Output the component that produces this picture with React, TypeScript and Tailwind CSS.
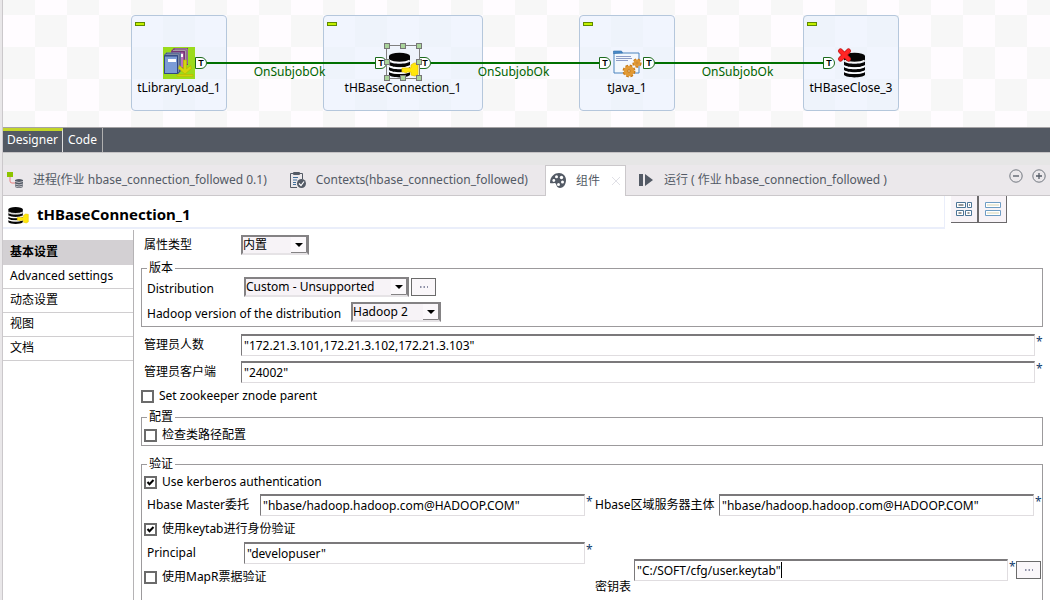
import React from "react";

const INK = "#535a65";

function DatabaseIcon({ overlay, className }: { overlay?: "key"; className?: string }) {
  return (
    <svg viewBox="0 0 32 32" className={className} aria-hidden="true">
      <path d="M2 9v4c0 3 21 3 21 0V9z" fill="#050505" />
      <ellipse cx="12.500" cy="9" rx="10.500" ry="3.200" fill="#050505" />
      <path d="M2 14.500c3 3 18 3 21 0V18c-3 3-18 3-21 0z" fill="#050505" />
      <path d="M2 20c3 3 18 3 21 0v3c-3 3-18 3-21 0z" fill="#050505" />
      <path d="M2 25c3 2.600 18 2.600 21 0v3c-3 3.200-18 3.200-21 0z" fill="#050505" />
      <path d="M2.500 13.200c4 2.800 16 2.800 20 0M2.500 18.900c4 2.800 16 2.800 20 0M2.500 24.200c4 2.700 16 2.700 20 0" fill="none" stroke="#fff" strokeWidth="1.200" />
      {overlay === "key" && (
        <g fill="#ffe70a" stroke="#e8c800" strokeWidth=".8">
          <path d="M15 21h9v-3l3-2 4 .5v11l-3 1.500-4-1v-3h-4l-1 1-2-1h-2z" />
        </g>
      )}
    </svg>
  );
}

function LibraryIcon() {
  return (
    <svg viewBox="0 0 32 32" className="size-8" aria-hidden="true">
      <path fill="#9bdb1c" d="M0 0h32v32H0z" />
      <path d="M8 4l3-3h14v17h-3v4H8z" fill="#7d3b7c" />
      <path d="M10 3.500h12.500V20M11.500 2h12.500v15" fill="none" stroke="#a79aa9" />
      <path d="M9.500 5h11.500v16H9.500z" fill="#bc72bd" stroke="#71316f" />
      <path d="M17 7h3v3h-3z" fill="#fff" />
      <path d="M1 8l2.500-2.500H18V24l-3 3H1z" fill="#3f558d" />
      <path d="M2.500 7.500h13V25M4 6h13v17" fill="none" stroke="#8d97aa" strokeWidth=".8" />
      <path d="M1.500 9h13v17.500h-13z" fill="#7b9bd6" stroke="#33477f" />
      <path d="M5 12h8v3H5z" fill="#fff" />
      <path d="M20.500 13h3v9l4-3.500 1 3-6.500 5.500-6.500-5.500 1-3 4 3.500zM14 27.500h16v1.800H14z" fill="#d3d60c" stroke="#b9b900" strokeWidth=".7" />
    </svg>
  );
}

function JavaIcon() {
  const gear = (cx: number, cy: number, r: number) => (
    <g>
      <circle cx={cx} cy={cy} r={r} fill="none" stroke="#c77916" strokeWidth="2.500" strokeDasharray="2.500 1.600" />
      <circle cx={cx} cy={cy} r={r} fill="#e29a35" />
      <circle cx={cx} cy={cy} r={r / 3.5} fill="#d9b27a" stroke="#c77916" strokeWidth=".7" />
    </g>
  );
  return (
    <svg viewBox="0 0 32 32" className="size-8" aria-hidden="true">
      <path d="M3 26V6h25v20z" fill="#f3f8fd" stroke="#4b83be" />
      <path d="M2.500 6.500V4h8l1 2h-2z" fill="#4d8dcb" stroke="#2f6ba8" strokeWidth=".6" />
      <path d="M5 9.500h15M5 11.500h16M5 13.500h12" stroke="#8091c0" strokeWidth=".9" />
      {gear(26, 16, 3.4)}
      {gear(18, 24, 5.2)}
    </svg>
  );
}

function Trigger({ className }: { className: string }) {
  return (
    <span
      className={`absolute top-[42px] flex h-3 w-3 items-center justify-center rounded-r-md border border-[#1c6b1c] bg-white font-['Liberation_Sans',sans-serif] text-[9px] leading-none font-bold text-black ${className}`}
    >
      T
    </span>
  );
}

function Node({ name, className, children }: { name: string; className: string; children: React.ReactNode }) {
  return (
    <div className={`absolute top-[15px] h-24 rounded-[4px] border border-[#b5c7dc] bg-[#e9f1fd]/65 ${className}`}>
      <span className="absolute top-[6px] left-[3px] h-1 w-[10px] border border-[#5f8a00] bg-[#c3f000]" />
      <div className="flex justify-center pt-[31px]">{children}</div>
      <div className="pt-px text-center text-[12px] leading-4 whitespace-nowrap text-black">{name}</div>
    </div>
  );
}

function Link({ className, label }: { className: string; label: string }) {
  return (
    <div className={`absolute top-[62px] border-t-2 border-[#007000] pr-1 text-center text-[12px] leading-4 text-[#006400] ${className}`}>
      {label}
    </div>
  );
}

function Handles() {
  const spots = [
    [0, 0], [16, 0], [32, 0], [0, 16], [32, 16], [0, 32], [16, 32], [32, 32],
  ];
  return (
    <svg viewBox="0 0 38 38" className="absolute top-[28px] left-[61px] size-[38px]" aria-hidden="true">
      <path d="M2.500 2.500h33v33h-33z" fill="none" stroke="#808080" />
      {spots.map(([x, y]) => (
        <rect key={`${x}-${y}`} x={x + 0.5} y={y + 0.5} width="5" height="5" fill="#a9d39a" stroke="#777" />
      ))}
    </svg>
  );
}

function Canvas() {
  return (
    <div className="relative h-[127px] shrink-0 overflow-hidden bg-[conic-gradient(#f7f7f7_25%,#fffcff_0_50%,#f7f7f7_0_75%,#fffcff_0)] bg-[length:64px_64px] bg-[position:0_15px]">
      <Node name="tLibraryLoad_1" className="left-32 w-24"><LibraryIcon /></Node>
      <Node name="tHBaseConnection_1" className="left-80 w-40"><DatabaseIcon overlay="key" className="size-8" /></Node>
      <Node name="tJava_1" className="left-[576px] w-24"><JavaIcon /></Node>
      <Node name="tHBaseClose_3" className="left-[800px] w-24">
        <svg viewBox="0 0 32 32" className="size-8" aria-hidden="true">
          <g transform="translate(7 0)">
            <path d="M2 9v4c0 3 21 3 21 0V9z" fill="#050505" />
            <ellipse cx="12.500" cy="9" rx="10.500" ry="3.200" fill="#050505" />
            <path d="M2 14.500c3 3 18 3 21 0V18c-3 3-18 3-21 0zM2 20c3 3 18 3 21 0v3c-3 3-18 3-21 0zM2 25c3 2.600 18 2.600 21 0v3c-3 3.200-18 3.200-21 0z" fill="#050505" />
            <path d="M2.500 13.200c4 2.800 16 2.800 20 0M2.500 18.900c4 2.800 16 2.800 20 0M2.500 24.200c4 2.700 16 2.700 20 0" fill="none" stroke="#fff" strokeWidth="1.200" />
          </g>
          <path d="M5.500 4l8 8M13.500 4l-8 8" stroke="#bd1717" strokeWidth="5" strokeLinecap="round" />
          <path d="M5.500 4l8 8M13.500 4l-8 8" stroke="#ff2525" strokeWidth="3.600" strokeLinecap="round" />
        </svg>
      </Node>
      <Link className="left-[204px] w-[169px]" label="OnSubjobOk" />
      <Link className="left-[428px] w-[169px]" label="OnSubjobOk" />
      <Link className="left-[652px] w-[169px]" label="OnSubjobOk" />
      <div className="absolute top-[15px] left-0">
        <Trigger className="left-[192px]" />
        <Trigger className="left-[372px]" />
        <Trigger className="left-[416px]" />
        <Trigger className="left-[596px]" />
        <Trigger className="left-[640px]" />
        <Trigger className="left-[820px]" />
      </div>
      <div className="absolute top-[15px] left-80"><Handles /></div>
    </div>
  );
}

function ViewTab({ icon, children, className }: { icon: React.ReactNode; children: React.ReactNode; className: string }) {
  return (
    <button type="button" className={`flex h-[31px] items-center gap-[10px] border-b border-[#cbc8cb] whitespace-nowrap ${className}`}>
      {icon}
      {children}
    </button>
  );
}

function ViewTabs() {
  return (
    <div className="flex h-[43px] shrink-0 items-end bg-[linear-gradient(#e6e6e6_12px,#ebe8eb_12px)] text-[12px] text-[#535a65]">
      <ViewTab
        className="pl-1"
        icon={
          <svg viewBox="0 0 16 16" className="size-4" aria-hidden="true">
            <path d="M3 5v4q0 2 2 2h4" fill="none" stroke="#e58080" />
            <path fill="#8dc400" d="M0 0h6v5H0z" />
            <path d="M8 8q4-2 8 0v7q-4 2-8 0z" fill={INK} />
            <path d="M8 9.500q4 2 8 0M8 12q4 2 8 0M8 14q4 2 8 0" fill="none" stroke="#dedbe0" strokeWidth=".8" />
          </svg>
        }
      >
        进程(作业 hbase_connection_followed 0.1)
      </ViewTab>
      <ViewTab
        className="pl-[23px]"
        icon={
          <svg viewBox="0 0 16 16" className="size-4" aria-hidden="true">
            <path d="M7 15.500H.5v-14h12V7M3.500.5h6v2h-6z" fill="none" stroke={INK} />
            <path d="M3 5.500h5M3 8h4M3 10.500h3M3 12.500h3" fill="none" stroke="#3f6f9c" />
            <circle cx="11.500" cy="11.500" r="4.500" fill={INK} />
            <path d="M9 11.500l2 2 3-4" fill="none" stroke="#fff" strokeWidth="1.200" />
          </svg>
        }
      >
        Contexts(hbase_connection_followed)
      </ViewTab>
      <span className="h-[31px] w-[17px] border-b border-[#cbc8cb]" />
      <button type="button" className="flex h-[31px] items-center border-x border-t border-[#cbc8cb] bg-white pl-1">
        <svg viewBox="0 0 16 16" className="size-4" aria-hidden="true">
          <path d="M0 10C0 3 5 0 9 0c4 0 7 3 7 7 0 5-3 8-6 8-4 0-3-4-5-5-1-.5-3 1-5 0z" fill={INK} />
          <circle cx="3.800" cy="7.500" r="1.400" fill="#fff" />
          <circle cx="6.500" cy="3.800" r="1.500" fill="#fff" />
          <circle cx="11.500" cy="4.500" r="1.700" fill="#fff" />
          <circle cx="12.500" cy="9" r="1.500" fill="#fff" />
          <circle cx="8.500" cy="11.500" r="1.500" fill="#fff" />
        </svg>
        <span className="pr-3 pl-[10px]">组件</span>
        <svg viewBox="0 0 8 8" className="mr-[5px] size-2" aria-hidden="true">
          <path d="M0 0l8 8M8 0L0 8" stroke="#d8d8e0" strokeWidth=".8" />
        </svg>
      </button>
      <ViewTab
        className="flex-1 pl-3"
        icon={
          <svg viewBox="0 0 16 16" className="size-4" aria-hidden="true">
            <path d="M1 2h4v12H1zM7 2l8 6-8 6z" fill={INK} />
          </svg>
        }
      >
        运行 ( 作业 hbase_connection_followed )
      </ViewTab>
      <div className="flex h-[31px] gap-[9px] border-b border-[#cbc8cb] pt-1 pr-1">
        {["M4 7h6", "M4 7h6M7 4v6"].map((d) => (
          <button key={d} type="button" aria-label={d.length > 6 ? "Maximize" : "Minimize"} className="size-[14px]">
            <svg viewBox="0 0 14 14" className="size-[14px]" aria-hidden="true">
              <circle cx="7" cy="7" r="6.200" fill="none" stroke={INK} strokeWidth=".8" />
              <path d={d} stroke={INK} strokeWidth="1.300" />
            </svg>
          </button>
        ))}
      </div>
    </div>
  );
}

function Heading() {
  return (
    <div className="flex h-[34px] shrink-0 items-start">
      <div className="flex h-[33px] flex-1 items-center gap-2 border-r border-b-2 border-[#eaeefa] pt-1 pl-1">
        <DatabaseIcon overlay="key" className="size-[22px]" />
        <h1 className="text-[15px] leading-5 font-bold text-black">tHBaseConnection_1</h1>
      </div>
      <div className="mr-[43px] ml-[6px] flex">
        <button type="button" aria-label="Table view" className="flex h-[27px] w-7 items-center justify-center border-r-2 border-b border-[#6b696b] bg-[#f7f3f7]">
          <svg viewBox="0 0 16 14" className="h-[14px] w-4" aria-hidden="true">
            <path d="M.5.500h9v5h-9zM11.500.500h4v5h-4zM.5 8.500h7v5h-7zM9.500 8.500h6v5h-6z" fill="#fff" stroke="#4c7596" />
            <path d="M2.500 3h5M13 3h1M2.500 11h3M11.500 11h2" stroke="#999" strokeWidth="2" />
          </svg>
        </button>
        <button type="button" aria-label="List view" className="flex h-[27px] w-7 items-center justify-center border-r border-b border-[#6b696b] bg-[#f7f3f7]">
          <svg viewBox="0 0 16 14" className="h-[14px] w-4" aria-hidden="true">
            <path d="M.5.500h15v5H.5zM.5 8.500h15v5H.5z" fill="#fff" stroke="#6e9cc4" />
            <path d="M2 3h12M2 11h12" stroke="#eae9d8" strokeWidth="2" />
          </svg>
        </button>
      </div>
    </div>
  );
}

function Sidebar() {
  return (
    <nav className="w-[131px] shrink-0 border-r border-[#b5b3b5] pt-[10px] text-[12px] leading-6 text-black">
      <a href="#basic" className="block h-[25px] bg-[#d3d0d3] pl-[7px] font-bold">基本设置</a>
      {["Advanced settings", "动态设置", "视图", "文档"].map((t) => (
        <a key={t} href="#settings" className="block h-6 border-b border-[#d0ced0] pl-[7px] leading-[22px]">{t}</a>
      ))}
    </nav>
  );
}

function Dropdown({ id, value, className }: { id: string; value: string; className: string }) {
  return (
    <span className={`relative block h-5 shrink-0 ${className}`}>
      <select id={id} className="block h-5 w-full appearance-none border-2 border-t-[#848284] border-r-[#848284] border-b-[#e6e3e6] border-l-[#848284] bg-[#f7f3f7] pr-4 text-[12px] leading-4 text-black outline-none">
        <option>{value}</option>
      </select>
      <svg viewBox="0 0 16 16" className="pointer-events-none absolute top-[2px] right-[2px] size-4" aria-hidden="true">
        <path d="M0 0h16v16H0z" fill="#fbf8fb" />
        <path d="M15.500 0v15.500H0" fill="none" stroke="#848284" />
        <path d="M4 6h8l-4 4z" fill="#000" />
      </svg>
    </span>
  );
}

function TextField({ id, value, className = "", focused = false }: { id: string; value: string; className?: string; focused?: boolean }) {
  return (
    <div className={`flex min-w-0 ${className}`}>
      <span className="relative min-w-0 flex-1">
        <input
          id={id}
          defaultValue={value}
          className="block h-[22px] w-full border border-t-2 border-t-[#7b797b] border-r-[#e0dde0] border-b-[#e0dde0] border-l-[#7b797b] bg-white px-[2px] text-[12px] leading-4 text-black outline-none"
        />
        {focused && (
          <span className="pointer-events-none absolute top-[3px] left-[3px] flex text-[12px] leading-4">
            <span className="invisible">{value}</span>
            <span className="h-4 w-px bg-black" />
          </span>
        )}
      </span>
      <span className="w-2 pl-px text-[12px] leading-4 text-[#103c6b]">*</span>
    </div>
  );
}

function Check({ label, checked = false }: { label: string; checked?: boolean }) {
  return (
    <label className="flex h-4 items-center gap-[5px] whitespace-nowrap">
      <span className="relative block size-[13px]">
        <input type="checkbox" defaultChecked={checked} className="peer block size-[13px] appearance-none border-2 border-[#6b6b6b] bg-white" />
        <svg viewBox="0 0 13 13" className="pointer-events-none absolute top-0 left-0 hidden size-[13px] peer-checked:block" aria-hidden="true">
          <path d="M3.500 6l2 2.200L9.500 4" fill="none" stroke="#000" strokeWidth="2" />
        </svg>
      </span>
      {label}
    </label>
  );
}

function More({ label }: { label: string }) {
  return (
    <button type="button" aria-label={label} className="flex h-[18px] w-[25px] shrink-0 items-center justify-center border border-[#6b6b6b] bg-[#faf7fa]">
      <svg viewBox="0 0 8 2" className="mb-px h-[2px] w-2" aria-hidden="true">
        <path d="M0 1h1.500M3.500 1H5M7 1h1" stroke="#222a55" strokeWidth="1.200" />
      </svg>
    </button>
  );
}

function Legend({ children }: { children: React.ReactNode }) {
  return <legend className="ml-[5px] h-4 px-[2px] leading-4">{children}</legend>;
}

export default function App() {
  return (
    <div className="h-screen overflow-hidden border-l-2 border-[#e9e7e9] bg-white font-['Noto_Sans','Noto_Sans_CJK_SC',sans-serif]">
      <div className="flex h-full flex-col border-l border-[#cbc8cb]">
        <Canvas />
        <div className="flex h-[26px] shrink-0 items-stretch border-t border-b border-t-[#a5a3a5] border-b-[#c5c3c5] bg-[#535963] text-[12px] text-white">
          <button type="button" className="border-t-[3px] border-r border-t-[#c3d52a] border-r-[#dddddd] px-1 pb-[3px]">Designer</button>
          <button type="button" className="border-r border-[#b0b0b0] px-[5px]">Code</button>
        </div>
        <ViewTabs />
        <Heading />
        <div className="flex min-h-0 flex-1">
          <Sidebar />
          <main className="flex min-w-0 flex-1 flex-col pt-[5px] pr-[7px] pl-[7px] text-[12px] leading-4 text-black">
            <div className="flex h-5 shrink-0 items-center">
              <label htmlFor="property" className="w-[100px] pl-[3px]">属性类型</label>
              <Dropdown id="property" value="内置" className="w-[68px]" />
            </div>
            <fieldset className="mt-[5px] shrink-0 border border-[#9c9a9c]">
              <Legend>版本</Legend>
              <div className="flex flex-col gap-[5px] pt-px pb-1 pl-[5px]">
                <div className="flex h-5 items-center">
                  <label htmlFor="distribution" className="w-[97px] pt-1">Distribution</label>
                  <Dropdown id="distribution" value="Custom - Unsupported" className="mr-[2px] w-[165px]" />
                  <More label="Choose distribution" />
                </div>
                <div className="flex h-5 items-center">
                  <label htmlFor="version" className="w-[204px] pt-1 whitespace-nowrap">Hadoop version of the distribution</label>
                  <Dropdown id="version" value="Hadoop 2" className="w-[90px]" />
                </div>
              </div>
            </fieldset>
            <div className="mt-[7px] flex shrink-0 items-center">
              <label htmlFor="quorum" className="w-[100px] pl-[3px]">管理员人数</label>
              <TextField id="quorum" value={'"172.21.3.101,172.21.3.102,172.21.3.103"'} className="flex-1" />
            </div>
            <div className="mt-[5px] flex shrink-0 items-center">
              <label htmlFor="port" className="w-[100px] pl-[3px]">管理员客户端</label>
              <TextField id="port" value={'"24002"'} className="flex-1" />
            </div>
            <div className="mt-[5px] shrink-0"><Check label="Set zookeeper znode parent" /></div>
            <fieldset className="mt-[5px] shrink-0 border border-[#9c9a9c]">
              <Legend>配置</Legend>
              <div className="pt-[2px] pb-[2px] pl-[2px]"><Check label="检查类路径配置" /></div>
            </fieldset>
            <fieldset className="mt-[10px] shrink-0 border border-[#9c9a9c]">
              <Legend>验证</Legend>
              <div className="grid grid-cols-2 pt-[2px] pb-8 pl-[2px]">
                <div className="flex flex-col">
                  <Check label="Use kerberos authentication" checked />
                  <div className="mt-1 flex items-center">
                    <label htmlFor="master" className="w-[116px] pl-[3px] whitespace-nowrap">Hbase Master委托</label>
                    <TextField id="master" value={'"hbase/hadoop.hadoop.com@HADOOP.COM"'} className="flex-1" />
                  </div>
                  <div className="mt-[5px]"><Check label="使用keytab进行身份验证" checked /></div>
                  <div className="mt-[5px] flex items-center">
                    <label htmlFor="principal" className="w-[100px] pl-[3px]">Principal</label>
                    <TextField id="principal" value={'"developuser"'} className="flex-1" />
                  </div>
                  <div className="mt-[5px]"><Check label="使用MapR票据验证" /></div>
                </div>
                <div className="flex flex-col pt-5 pl-[2px]">
                  <div className="flex items-center">
                    <label htmlFor="region" className="w-[124px] whitespace-nowrap">Hbase区域服务器主体</label>
                    <TextField id="region" value={'"hbase/hadoop.hadoop.com@HADOOP.COM"'} className="flex-1" />
                  </div>
                  <div className="mt-[43px] flex items-start pr-px">
                    <label htmlFor="keytab" className="w-[39px] pt-5">密钥表</label>
                    <TextField id="keytab" value={'"C:/SOFT/cfg/user.keytab"'} className="flex-1" focused />
                    <div className="pt-[2px]"><More label="Browse keytab" /></div>
                  </div>
                </div>
              </div>
            </fieldset>
          </main>
        </div>
      </div>
    </div>
  );
}
